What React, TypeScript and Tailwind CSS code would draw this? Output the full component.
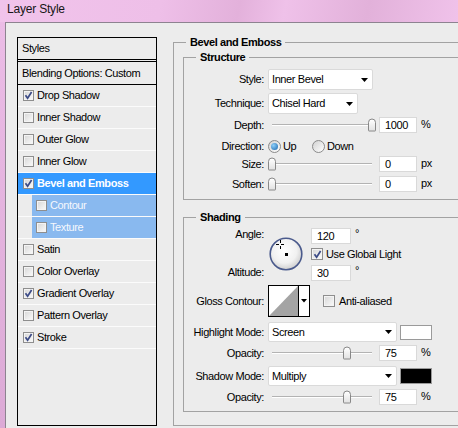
import React from "react";

const Tri = () => (
  <svg width="7" height="4" viewBox="0 0 7 4">
    <polygon points="0,0 7,0 3.5,4" fill="#000" />
  </svg>
);

function Check({ checked, big }: { checked?: boolean; big?: boolean }) {
  return (
    <span
      className={`${big ? "w-[12px] h-[12px]" : "w-[11px] h-[11px]"} shrink-0 border border-[#8e8e8e] bg-[linear-gradient(135deg,#d6d6d6,#fbfbfb)] shadow-[inset_0_0_0_1px_#f4f4f4] flex items-center justify-center`}
    >
      {checked && (
        <svg width="9" height="9" viewBox="0 0 9 9">
          <path d="M1.5 4.2 L3.6 7.3 L7.6 1" fill="none" stroke="#3b4a86" strokeWidth="1.7" />
        </svg>
      )}
    </span>
  );
}

function Radio({ on }: { on?: boolean }) {
  return (
    <span className="w-[13px] h-[13px] shrink-0 rounded-full border border-[#8a8a8a] bg-[linear-gradient(135deg,#d2d2d2,#ffffff)] flex items-center justify-center">
      {on && (
        <span className="w-[7px] h-[7px] rounded-full bg-[radial-gradient(circle_at_35%_35%,#8fd0fa,#1a66ad)]" />
      )}
    </span>
  );
}

function Select({ value, w }: { value: string; w: string }) {
  return (
    <div
      className={`${w} h-full bg-white border border-[#dadada] rounded-[2px] flex items-center justify-between pl-[3px] pr-[4px]`}
    >
      <span>{value}</span>
      <Tri />
    </div>
  );
}

function Val({ v, w }: { v: string; w: string }) {
  return (
    <div className={`${w} h-[16px] shrink-0 bg-white border border-[#d9d9d9] pl-[5px] flex items-center`}>
      {v}
    </div>
  );
}

function Slider({ pct }: { pct: number }) {
  return (
    <div className="relative w-[108px] h-full shrink-0 flex items-center">
      <div className="mx-[4px] flex-1 h-[2px] bg-[#b3b3b3] border-b border-white" />
      <div
        className="absolute top-1/2 -translate-y-1/2 w-[8px] h-[13px] bg-[linear-gradient(#ffffff,#e2e2e2)] border border-[#888888] rounded-t-[4px] rounded-b-[1px]"
        style={{ left: Math.round(pct * 100) }}
      />
    </div>
  );
}

function Label({ children }: { children: React.ReactNode }) {
  return <div className="w-[80px] shrink-0 text-right">{children}</div>;
}

const items: { label: string; checked?: boolean; active?: boolean; sub?: boolean }[] = [
  { label: "Drop Shadow", checked: true },
  { label: "Inner Shadow" },
  { label: "Outer Glow" },
  { label: "Inner Glow" },
  { label: "Bevel and Emboss", checked: true, active: true },
  { label: "Contour", sub: true },
  { label: "Texture", sub: true },
  { label: "Satin" },
  { label: "Color Overlay" },
  { label: "Gradient Overlay", checked: true },
  { label: "Pattern Overlay" },
  { label: "Stroke", checked: true },
];

function AngleDial() {
  return (
    <svg width="34" height="34" viewBox="0 0 34 34">
      <defs>
        <radialGradient id="dialg" cx="45%" cy="40%" r="60%">
          <stop offset="0" stopColor="#ffffff" />
          <stop offset="0.65" stopColor="#f1f1f1" />
          <stop offset="1" stopColor="#cfcfcf" />
        </radialGradient>
      </defs>
      <circle cx="17" cy="17" r="15.8" fill="url(#dialg)" stroke="#4a5a8c" strokeWidth="1.6" />
      <rect x="16" y="16" width="3" height="3" fill="#000" />
      <line x1="7" y1="7.5" x2="10" y2="7.5" stroke="#000" strokeWidth="1" />
      <line x1="12" y1="7.5" x2="15" y2="7.5" stroke="#000" strokeWidth="1" />
      <line x1="11.5" y1="3" x2="11.5" y2="6" stroke="#000" strokeWidth="1" />
      <line x1="11.5" y1="9" x2="11.5" y2="12" stroke="#000" strokeWidth="1" />
    </svg>
  );
}

function Contour() {
  return (
    <svg width="42" height="32" viewBox="0 0 42 32">
      <rect x="0.5" y="0.5" width="41" height="31" fill="#fff" stroke="#000" />
      <polygon points="1,31 30,1 30,31" fill="#a4a4a4" />
      <line x1="30.5" y1="0" x2="30.5" y2="32" stroke="#000" />
      <polygon points="33,14 39,14 36,17.5" fill="#000" />
    </svg>
  );
}

export default function App() {
  return (
    <div className="w-[458px] h-[428px] overflow-hidden flex flex-col bg-[#e6b5e0] text-black font-['Liberation_Sans',Arial,sans-serif] text-[11px] leading-[13px] tracking-[-0.4px]">
      <div className="h-[22px] shrink-0 flex items-center pl-[7px] pb-[3px] bg-[linear-gradient(100deg,#f1c3eb_0%,#eebfe8_35%,#e3b1db_52%,#efc1e9_62%,#e2b1da_80%,#f0c2ea_100%)]">
        <span className="text-[12px] tracking-[-0.2px] text-[#161616]">Layer Style</span>
      </div>
      <div className="flex-1 flex min-h-0">
        <div className="w-[5px] shrink-0 bg-[linear-gradient(#ebbce6,#dcaad6)]" />
        <div className="flex-1 min-w-0 bg-[#ececec] border-l border-t border-[#8d8390] flex pl-[11px] pt-[14px] gap-[16px]">
          {/* Styles list */}
          <div className="w-[140px] h-[389px] shrink-0 border border-black flex flex-col">
            <div className="h-[22px] shrink-0 border-b border-black flex items-center pl-[4px]">Styles</div>
            <div className="h-[1px] shrink-0" />
            <div className="h-[24px] shrink-0 border-y border-black flex items-center pl-[4px]">
              Blending Options: Custom
            </div>
            {items.map((it) =>
              it.sub ? (
                <div key={it.label} className="h-[22px] shrink-0 border-b border-[#fbfbfb] flex pl-[14px]">
                  <div className="flex-1 bg-[#89b9ef] text-[#f5f8fd] flex items-center pl-[4px] gap-[3px]">
                    <Check checked={it.checked} />
                    <span>{it.label}</span>
                  </div>
                </div>
              ) : (
                <div
                  key={it.label}
                  className={`h-[22px] shrink-0 border-b border-[#fbfbfb] flex items-center pl-[5px] gap-[3px] ${
                    it.active ? "bg-[#3399ff] text-white font-bold" : ""
                  }`}
                >
                  <Check checked={it.checked} />
                  <span>{it.label}</span>
                </div>
              )
            )}
          </div>

          {/* Bevel and Emboss */}
          <fieldset className="shrink-0 w-[300px] self-start mt-[-2px] border border-[#a2a2a2] pb-[13px]">
            <legend className="ml-[12px] px-[4px] font-bold leading-[14px]">Bevel and Emboss</legend>

            <fieldset className="ml-[9px] mt-[1px] w-[300px] border border-[#a2a2a2] pt-[5px] pb-[6px]">
              <legend className="ml-[12px] px-[4px] font-bold leading-[14px]">Structure</legend>
              <div className="flex items-center h-[21px]">
                <Label>Style:</Label>
                <div className="ml-[4px] h-full">
                  <Select value="Inner Bevel" w="w-[105px]" />
                </div>
              </div>
              <div className="flex items-center h-[21px] mt-[3px]">
                <Label>Technique:</Label>
                <div className="ml-[4px] h-full">
                  <Select value="Chisel Hard" w="w-[90px]" />
                </div>
              </div>
              <div className="flex items-center h-[18px] mt-[2px]">
                <Label>Depth:</Label>
                <div className="ml-[4px] h-full flex items-center">
                  <Slider pct={1} />
                  <div className="ml-[3px]">
                    <Val v="1000" w="w-[38px]" />
                  </div>
                  <span className="ml-[4px] mb-[2px]">%</span>
                </div>
              </div>
              <div className="flex items-center h-[18px] mt-[3px]">
                <Label>Direction:</Label>
                <div className="ml-[4px] flex items-center">
                  <div className="w-[44px] flex items-center gap-[2px]">
                    <Radio on />
                    <span>Up</span>
                  </div>
                  <div className="flex items-center gap-[2px]">
                    <Radio />
                    <span>Down</span>
                  </div>
                </div>
              </div>
              <div className="flex items-center h-[18px]">
                <Label>Size:</Label>
                <div className="ml-[4px] h-full flex items-center">
                  <Slider pct={0} />
                  <div className="ml-[3px]">
                    <Val v="0" w="w-[38px]" />
                  </div>
                  <span className="ml-[4px] mb-[2px]">px</span>
                </div>
              </div>
              <div className="flex items-center h-[18px] mt-[2px]">
                <Label>Soften:</Label>
                <div className="ml-[4px] h-full flex items-center">
                  <Slider pct={0} />
                  <div className="ml-[3px]">
                    <Val v="0" w="w-[38px]" />
                  </div>
                  <span className="ml-[4px] mb-[2px]">px</span>
                </div>
              </div>
            </fieldset>

            <fieldset className="ml-[9px] mt-[10px] w-[300px] border border-[#a2a2a2] pt-[4px] pb-[5px]">
              <legend className="ml-[12px] px-[4px] font-bold leading-[14px]">Shading</legend>
              <div className="flex h-[53px]">
                <div className="w-[80px] shrink-0 text-right flex flex-col justify-between pb-[2px]">
                  <span>Angle:</span>
                  <span>Altitude:</span>
                </div>
                <div className="ml-[5px] mt-[9px] w-[34px] h-[34px] shrink-0">
                  <AngleDial />
                </div>
                <div className="ml-[8px] flex flex-col">
                  <div className="flex items-start">
                    <Val v="120" w="w-[40px]" />
                    <span className="ml-[4px] leading-[11px]">°</span>
                  </div>
                  <div className="mt-[4px] h-[12px] flex items-center gap-[3px]">
                    <Check checked big />
                    <span>Use Global Light</span>
                  </div>
                  <div className="mt-[5px] flex items-start">
                    <Val v="30" w="w-[40px]" />
                    <span className="ml-[4px] leading-[11px]">°</span>
                  </div>
                </div>
              </div>
              <div className="flex items-center h-[32px] mt-[4px]">
                <Label>Gloss Contour:</Label>
                <div className="ml-[4px] w-[42px] h-[32px] shrink-0">
                  <Contour />
                </div>
                <div className="ml-[13px] flex items-center gap-[4px]">
                  <Check big />
                  <span>Anti-aliased</span>
                </div>
              </div>
              <div className="flex items-center h-[20px] mt-[5px]">
                <Label>Highlight Mode:</Label>
                <div className="ml-[4px] h-full">
                  <Select value="Screen" w="w-[129px]" />
                </div>
                <div className="ml-[3px] w-[32px] h-[15px] bg-white border border-[#9a9a9a]" />
              </div>
              <div className="flex items-center h-[18px] mt-[2px]">
                <Label>Opacity:</Label>
                <div className="ml-[4px] h-full flex items-center">
                  <Slider pct={0.75} />
                  <div className="ml-[3px]">
                    <Val v="75" w="w-[38px]" />
                  </div>
                  <span className="ml-[4px] mb-[2px]">%</span>
                </div>
              </div>
              <div className="flex items-center h-[20px] mt-[4px]">
                <Label>Shadow Mode:</Label>
                <div className="ml-[4px] h-full">
                  <Select value="Multiply" w="w-[129px]" />
                </div>
                <div className="ml-[3px] w-[32px] h-[16px] bg-black border border-[#9a9a9a]" />
              </div>
              <div className="flex items-center h-[18px] mt-[2px]">
                <Label>Opacity:</Label>
                <div className="ml-[4px] h-full flex items-center">
                  <Slider pct={0.75} />
                  <div className="ml-[3px]">
                    <Val v="75" w="w-[38px]" />
                  </div>
                  <span className="ml-[4px] mb-[2px]">%</span>
                </div>
              </div>
            </fieldset>
          </fieldset>
        </div>
      </div>
    </div>
  );
}
